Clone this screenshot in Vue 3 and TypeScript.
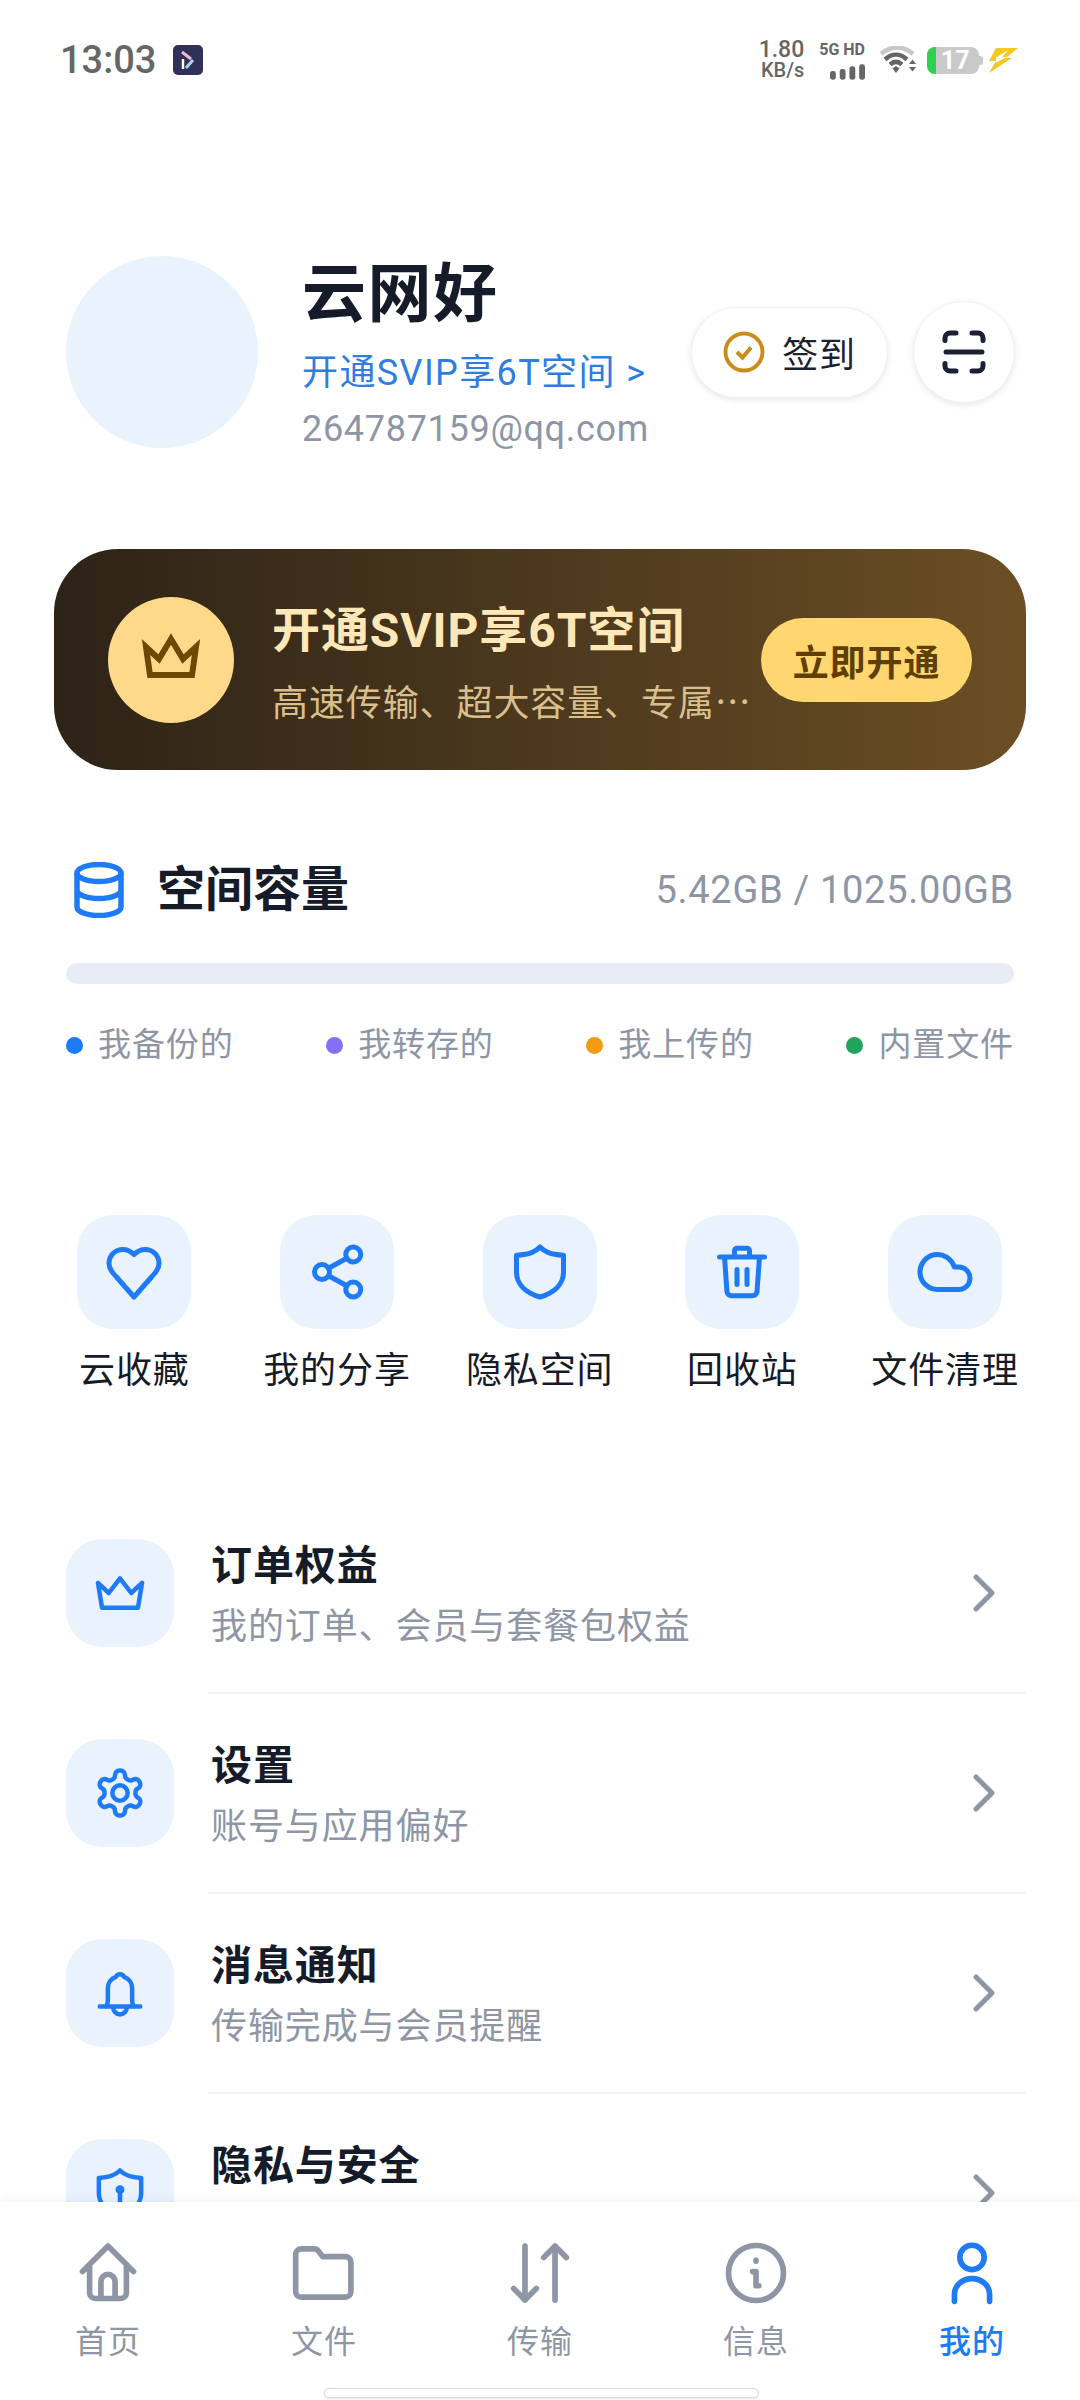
<script setup lang="ts">
type Shape = { d?: string; cx?: number; cy?: number; r?: number }

const icons: Record<string, Shape[]> = {
  heart: [{ d: 'M19 14c1.49-1.46 3-3.21 3-5.5A5.5 5.5 0 0 0 16.5 3c-1.76 0-3 .5-4.5 2-1.5-1.5-2.74-2-4.5-2A5.5 5.5 0 0 0 2 8.5c0 2.3 1.5 4.05 3 5.5l7 8Z' }],
  share: [
    { cx: 18.5, cy: 5, r: 3 },
    { cx: 6, cy: 12, r: 3 },
    { cx: 18.5, cy: 19, r: 3 },
    { d: 'M8.6 13.5l7.3 4M15.900 6.500l-7.300 4' },
  ],
  shield: [{ d: 'M12 2c1.8 1.900 4 3 9.400 3.300V12c0 4.800-3.600 8.300-9.400 10C6.200 20.300 2.600 16.800 2.600 12V5.300C8 5 10.200 3.900 12 2Z' }],
  trash: [{ d: 'M3 6h18M9 6V3.500A1 1 0 0 1 10 2.500h4a1 1 0 0 1 1 1V6M5 6l1 14a2 2 0 0 0 2 1.500h8a2 2 0 0 0 2-1.500l1-14M10 11v6M14 11v6' }],
  cloud: [{ d: 'M17.500 19H9a7 7 0 1 1 6.710-9h1.790a4.500 4.500 0 1 1 0 9Z' }],
  crown: [{ d: 'M2.200 7.500 7 12l5-6.500L17 12l4.800-4.500L20 18.500H4Z' }],
  gear: [
    { d: 'M12.220 2h-.44a2 2 0 0 0-2 2v.18a2 2 0 0 1-1 1.730l-.43.25a2 2 0 0 1-2 0l-.15-.08a2 2 0 0 0-2.730.73l-.22.38a2 2 0 0 0 .73 2.730l.15.1a2 2 0 0 1 1 1.720v.51a2 2 0 0 1-1 1.740l-.15.09a2 2 0 0 0-.73 2.730l.22.38a2 2 0 0 0 2.730.73l.15-.08a2 2 0 0 1 2 0l.43.25a2 2 0 0 1 1 1.730V20a2 2 0 0 0 2 2h.44a2 2 0 0 0 2-2v-.18a2 2 0 0 1 1-1.730l.43-.25a2 2 0 0 1 2 0l.15.08a2 2 0 0 0 2.730-.73l.22-.39a2 2 0 0 0-.73-2.730l-.15-.08a2 2 0 0 1-1-1.740v-.5a2 2 0 0 1 1-1.740l.15-.09a2 2 0 0 0 .73-2.730l-.22-.38a2 2 0 0 0-2.730-.73l-.15.08a2 2 0 0 1-2 0l-.43-.25a2 2 0 0 1-1-1.730V4a2 2 0 0 0-2-2Z' },
    { cx: 12, cy: 12, r: 3.4 },
  ],
  bell: [{ d: 'M3 18h18M5.800 18c.7-.8.8-2 .8-3V10a5.400 5.400 0 0 1 3.600-5.200 2 2 0 0 1 3.600 0 5.400 5.400 0 0 1 3.600 5.200v5c0 1 .1 2.200.8 3M9 18.500a3 3 0 0 0 6 0' }],
  lock: [{ d: 'M12 2c1.800 1.900 4 3 9.400 3.300V12c0 4.800-3.600 8.300-9.400 10C6.200 20.300 2.600 16.800 2.600 12V5.300C8 5 10.200 3.900 12 2ZM12 11v5' }, { cx: 12, cy: 10.500, r: 1 }],
  home: [{ d: 'M3 11.500 12 2.500l9 9M5.500 9.500V19a2 2 0 0 0 2 2h9a2 2 0 0 0 2-2V9.500M9.500 21v-6a2.500 2.500 0 0 1 5 0v6' }],
  folder: [{ d: 'M4 3.500h4.500a2 2 0 0 1 1.600.8l1.400 1.900h8a2 2 0 0 1 2 2V18.500a2 2 0 0 1-2 2H4a2 2 0 0 1-2-2v-13a2 2 0 0 1 2-2Z' }],
  transfer: [{ d: 'M6.700 2.500v19M2.700 17.500l4 4 4-4M17.300 21.500v-19M13.300 6.500l4-4 4 4' }],
  info: [{ cx: 12, cy: 12, r: 9.700 }, { d: 'M10.800 11.500H12V16.500h1M12 7.500v.3' }],
  user: [{ cx: 12, cy: 6.500, r: 4.300 }, { d: 'M5.800 22v-2.500a6.200 5.500 0 0 1 12.400 0V22' }],
}

const legend = [
  { label: '我备份的', color: '#1e7bf5' },
  { label: '我转存的', color: '#8370f5' },
  { label: '我上传的', color: '#f29c11' },
  { label: '内置文件', color: '#1fa45c' },
]

const tools = [
  { label: '云收藏', icon: 'heart' },
  { label: '我的分享', icon: 'share' },
  { label: '隐私空间', icon: 'shield' },
  { label: '回收站', icon: 'trash' },
  { label: '文件清理', icon: 'cloud' },
]

const menu = [
  { title: '订单权益', sub: '我的订单、会员与套餐包权益', icon: 'crown' },
  { title: '设置', sub: '账号与应用偏好', icon: 'gear' },
  { title: '消息通知', sub: '传输完成与会员提醒', icon: 'bell' },
  { title: '隐私与安全', sub: '', icon: 'lock' },
]

const tabs = [
  { label: '首页', icon: 'home' },
  { label: '文件', icon: 'folder' },
  { label: '传输', icon: 'transfer' },
  { label: '信息', icon: 'info' },
  { label: '我的', icon: 'user', active: true },
]
</script>

<template>
  <div class="page">
    <header class="status">
      <span class="time">13:03</span>
      <svg class="app-badge" viewBox="0 0 30 30">
        <rect width="30" height="30" rx="5" fill="#2f3158" />
        <path d="M9 7l9 7" stroke="#f2b6d8" stroke-width="3" />
        <path d="M10 14v10" stroke="#fff" stroke-width="2.500" />
        <path d="M20 15l-7 8" stroke="#a9d6f5" stroke-width="3" />
      </svg>
      <div class="status-right">
        <div class="speed"><span>1.80</span><span class="speed-unit">KB/s</span></div>
        <div class="net">
          <span>5G HD</span>
          <svg class="signal" viewBox="0 0 36 16">
            <rect x="0" y="7" width="6" height="9" rx="2.500" />
            <rect x="10" y="5" width="6" height="11" rx="2.500" />
            <rect x="20" y="2" width="6" height="14" rx="2.500" />
            <rect x="30" y="0" width="6" height="16" rx="2.500" />
          </svg>
        </div>
        <svg class="wifi" viewBox="0 0 38 28" fill="none">
          <path d="M2 8C11-.5 25-.5 34 8" stroke="#c8c8c8" stroke-width="4.500" />
          <path d="M6 13.500c7-6.500 15-6.500 22 0" stroke="#666" stroke-width="4.500" />
          <path d="M11 18.500c4-3.500 8-3.500 12 0" stroke="#666" stroke-width="4.500" />
          <path d="M13.500 22.500 17 20l3.500 2.500L17 27Z" fill="#666" />
          <path d="M30 18l3.500-4.500L37 18ZM30 21l3.500 4.500L37 21Z" fill="#666" />
        </svg>
        <div class="battery">
          <span class="battery-level"></span>
          <span class="battery-num">17</span>
          <span class="battery-cap"></span>
        </div>
        <svg class="bolt" viewBox="0 0 30 25">
          <path d="M8 0h22L18 10h6L1 25l7-12H1Z" fill="#f6c71e" />
          <path d="M8 9.500 20 2l-6 7.500 6-1-12 6Z" fill="#fff" />
        </svg>
      </div>
    </header>

    <section class="profile">
      <div class="avatar"></div>
      <div class="profile-text">
        <div class="name">云网好</div>
        <div class="upgrade-link">开通SVIP享6T空间 &gt;</div>
        <div class="email">264787159@qq.com</div>
      </div>
      <div class="profile-actions">
        <button class="checkin">
          <svg class="checkin-icon" viewBox="0 0 42 42" fill="none" stroke="#c98d1c">
            <circle cx="21" cy="21" r="18.500" stroke-width="4" />
            <path d="M14 21l5.500 5.500 8.500-10" stroke-width="4" />
          </svg>
          签到
        </button>
        <button class="scan">
          <svg viewBox="0 0 44 44" fill="none" stroke="#1a2130" stroke-width="5" stroke-linecap="round">
            <path d="M3 10.500V8a5 5 0 0 1 5-5h6M30 3h6a5 5 0 0 1 5 5v2.500M3 33.500V36a5 5 0 0 0 5 5h6M30 41h6a5 5 0 0 0 5-5v-2.500M4 22h36" />
          </svg>
        </button>
      </div>
    </section>

    <section class="banner">
      <div class="banner-badge">
        <svg viewBox="0 0 60 60" fill="none" stroke="#6e4700" stroke-width="6" stroke-linejoin="miter">
          <path d="M5 17l13 12L30 9l12 20 13-12-4 28H9Z" />
        </svg>
      </div>
      <div class="banner-text">
        <div class="banner-title">开通SVIP享6T空间</div>
        <div class="banner-sub">高速传输、超大容量、专属…</div>
      </div>
      <button class="banner-btn">立即开通</button>
    </section>

    <section class="storage">
      <div class="storage-head">
        <svg class="db-icon" viewBox="0 0 50 56" fill="none" stroke="#1e7bf5" stroke-width="5.500">
          <ellipse cx="25" cy="11" rx="22" ry="8.500" />
          <path d="M3 11v34c0 4.700 9.800 8.500 22 8.500s22-3.800 22-8.500V11M3 28c0 4.700 9.800 8.500 22 8.500s22-3.800 22-8.500" />
        </svg>
        <h2 class="storage-title">空间容量</h2>
        <span class="storage-value">5.42GB / 1025.00GB</span>
      </div>
      <div class="storage-bar"></div>
      <div class="legend">
        <div v-for="item in legend" :key="item.label" class="legend-item">
          <i class="legend-dot" :style="{ background: item.color }"></i>{{ item.label }}
        </div>
      </div>
    </section>

    <section class="tools">
      <div v-for="tool in tools" :key="tool.label" class="tool">
        <div class="tool-tile">
          <svg class="icon tool-icon" viewBox="0 0 24 24">
            <template v-for="(s, i) in icons[tool.icon]" :key="i">
              <path v-if="s.d" :d="s.d" />
              <circle v-else :cx="s.cx" :cy="s.cy" :r="s.r" />
            </template>
          </svg>
        </div>
        <span class="tool-label">{{ tool.label }}</span>
      </div>
    </section>

    <section class="menu">
      <div v-for="row in menu" :key="row.title" class="menu-row">
        <div class="menu-tile">
          <svg class="icon menu-icon" viewBox="0 0 24 24">
            <template v-for="(s, i) in icons[row.icon]" :key="i">
              <path v-if="s.d" :d="s.d" />
              <circle v-else :cx="s.cx" :cy="s.cy" :r="s.r" />
            </template>
          </svg>
        </div>
        <div class="menu-body">
          <div class="menu-title">{{ row.title }}</div>
          <div v-if="row.sub" class="menu-sub">{{ row.sub }}</div>
        </div>
        <svg class="chevron" viewBox="0 0 24 40" fill="none">
          <path d="M4 4l16 16L4 36" />
        </svg>
      </div>
    </section>

    <nav class="tabbar">
      <div class="tabs">
        <div v-for="tab in tabs" :key="tab.label" class="tab" :class="{ active: tab.active }">
          <svg class="icon tab-icon" viewBox="0 0 24 24">
            <template v-for="(s, i) in icons[tab.icon]" :key="i">
              <path v-if="s.d" :d="s.d" />
              <circle v-else :cx="s.cx" :cy="s.cy" :r="s.r" />
            </template>
          </svg>
          <span>{{ tab.label }}</span>
        </div>
      </div>
      <div class="home-indicator"></div>
    </nav>
  </div>
</template>

<style>
html, body {
  margin: 0;
  background: #fff;
}
</style>

<style scoped>
.page {
  position: relative;
  width: 1080px;
  height: 2400px;
  overflow: hidden;
  background: #fff;
  font-family: Roboto, "Noto Sans CJK SC", sans-serif;
  letter-spacing: 0.9px;
  color: #151b28;
}

.status {
  display: flex;
  align-items: center;
  height: 120px;
  padding: 0 62px 0 60px;
  box-sizing: border-box;
  color: #666;
  letter-spacing: 0;
}

.time {
  font-size: 38px;
  font-weight: 500;
}

.app-badge {
  width: 30px;
  height: 30px;
  margin-left: 17px;
}

.status-right {
  display: flex;
  align-items: center;
  margin-left: auto;
}

.speed {
  display: flex;
  flex-direction: column;
  align-items: flex-end;
  font-size: 23px;
  font-weight: 500;
  line-height: 21px;
}

.speed-unit {
  font-size: 20px;
}

.net {
  display: flex;
  flex-direction: column;
  align-items: flex-end;
  margin-left: 15px;
  font-size: 16px;
  font-weight: 700;
  line-height: 18px;
}

.signal {
  width: 35px;
  height: 16px;
  fill: #666;
  margin-top: 5px;
}

.wifi {
  width: 38px;
  height: 28px;
  margin-left: 14px;
}

.battery {
  position: relative;
  width: 52px;
  height: 27px;
  margin-left: 10px;
  border-radius: 8px;
  background: #c9c9c9;
}

.battery-level {
  position: absolute;
  left: 0;
  top: 0;
  width: 9px;
  height: 27px;
  border-radius: 8px 0 0 8px;
  background: #2fd24f;
}

.battery-num {
  position: absolute;
  left: 14px;
  top: 0;
  font-size: 25px;
  font-weight: 700;
  line-height: 27px;
  color: #fff;
}

.battery-cap {
  position: absolute;
  right: -4px;
  top: 9px;
  width: 4px;
  height: 9px;
  border-radius: 0 3px 3px 0;
  background: #c9c9c9;
}

.bolt {
  width: 30px;
  height: 25px;
  margin-left: 9px;
}

.profile {
  display: flex;
  align-items: center;
  height: 192px;
  margin-top: 136px;
  padding: 0 65px 0 66px;
}

.avatar {
  flex: none;
  width: 192px;
  height: 192px;
  border-radius: 50%;
  background: #e9f2fd;
}

.profile-text {
  margin-left: 44px;
  padding-top: 10px;
  white-space: nowrap;
}

.name {
  margin-top: -3px;
  font-size: 64px;
  font-weight: 700;
  line-height: 76px;
  letter-spacing: 1.5px;
}

.upgrade-link {
  margin-top: 15px;
  font-size: 36px;
  line-height: 50px;
  letter-spacing: 1.4px;
  color: #2f7de1;
}

.email {
  margin-top: 6px;
  font-size: 36px;
  line-height: 50px;
  letter-spacing: 0.7px;
  color: #8e96a5;
}

.profile-actions {
  display: flex;
  align-items: center;
  gap: 25px;
  margin-left: auto;
}

.checkin {
  display: flex;
  align-items: center;
  gap: 17px;
  height: 91px;
  padding: 0 31px;
  border: 1px solid #f0f1f4;
  border-radius: 46px;
  background: #fff;
  box-shadow: 0 2px 6px rgba(20, 30, 50, 0.1);
  font: inherit;
  font-size: 36px;
  letter-spacing: inherit;
  color: #1a2130;
}

.checkin-icon {
  width: 42px;
  height: 42px;
}

.scan {
  display: flex;
  align-items: center;
  justify-content: center;
  width: 102px;
  height: 102px;
  padding: 0;
  border: 1px solid #f0f1f4;
  border-radius: 50%;
  background: #fff;
  box-shadow: 0 2px 6px rgba(20, 30, 50, 0.1);
}

.scan svg {
  width: 44px;
  height: 44px;
}

.banner {
  display: flex;
  align-items: center;
  height: 221px;
  margin: 101px 54px 0;
  padding: 0 54px;
  border-radius: 64px;
  background: linear-gradient(90deg, #2d2317, #6b4e24);
}

.banner-badge {
  display: flex;
  flex: none;
  align-items: center;
  justify-content: center;
  width: 126px;
  height: 126px;
  border-radius: 50%;
  background: #ffd98a;
}

.banner-badge svg {
  width: 60px;
  height: 60px;
}

.banner-text {
  flex: 1;
  min-width: 0;
  margin-left: 38px;
  padding-top: 6px;
}

.banner-title {
  font-size: 48px;
  font-weight: 700;
  line-height: 60px;
  color: #ffe7b8;
}

.banner-sub {
  margin-top: 14px;
  font-family: "Noto Sans CJK SC", sans-serif;
  font-size: 36px;
  line-height: 50px;
  color: #d9bf8c;
  white-space: nowrap;
}

.banner-btn {
  flex: none;
  width: 211px;
  height: 84px;
  margin-left: 10px;
  padding: 0;
  border: none;
  border-radius: 42px;
  background: #ffd670;
  font: inherit;
  font-size: 36px;
  font-weight: 700;
  letter-spacing: inherit;
  color: #5e3f05;
}

.storage {
  margin-top: 92px;
  padding: 0 66px;
}

.storage-head {
  display: flex;
  align-items: center;
  height: 56px;
}

.db-icon {
  width: 50px;
  height: 56px;
  margin-left: 8px;
}

.storage-title {
  margin: -11px 0 0 33px;
  font-size: 48px;
  font-weight: 700;
  letter-spacing: 0;
}

.storage-value {
  margin-left: auto;
  font-size: 38px;
  letter-spacing: 0.7px;
  color: #8e96a5;
}

.storage-bar {
  height: 21px;
  margin-top: 45px;
  border-radius: 11px;
  background: #e8edf5;
}

.legend {
  display: flex;
  justify-content: space-between;
  margin-top: 40px;
}

.legend-item {
  display: flex;
  align-items: center;
  gap: 15px;
  font-size: 33px;
  line-height: 42px;
  color: #8e96a5;
}

.legend-dot {
  width: 17px;
  height: 17px;
  border-radius: 50%;
}

.icon {
  fill: none;
  stroke: currentColor;
  stroke-width: 2;
  stroke-linecap: round;
  stroke-linejoin: round;
}

.tools {
  display: grid;
  grid-template-columns: repeat(5, 202.700px);
  margin-top: 149px;
  padding-left: 33px;
}

.tool {
  display: flex;
  flex-direction: column;
  align-items: center;
}

.tool-tile {
  display: flex;
  align-items: center;
  justify-content: center;
  width: 114px;
  height: 114px;
  border-radius: 36px;
  background: #e9f2fd;
  color: #1e7bf5;
}

.tool-icon {
  width: 60px;
  height: 60px;
}

.tool-label {
  margin-top: 17px;
  font-size: 36px;
  line-height: 50px;
  white-space: nowrap;
}

.menu {
  margin-top: 143px;
  padding-left: 66px;
}

.menu-row {
  position: relative;
  display: flex;
  align-items: flex-start;
  height: 200px;
  box-sizing: border-box;
}

.menu-row::after {
  content: "";
  position: absolute;
  left: 142px;
  right: 54px;
  top: 153px;
  height: 2px;
  background: #f1f3f6;
}

.menu-tile {
  display: flex;
  flex: none;
  align-items: center;
  justify-content: center;
  width: 108px;
  height: 108px;
  border-radius: 36px;
  background: #e9f2fd;
  color: #1e7bf5;
}

.menu-icon {
  width: 54px;
  height: 54px;
}

.menu-body {
  flex: 1;
  margin-top: 1px;
  margin-left: 37px;
}

.menu-title {
  font-size: 41px;
  font-weight: 700;
  line-height: 52px;
}

.menu-sub {
  margin-top: 10px;
  font-size: 36px;
  line-height: 50px;
  color: #8e96a5;
}

.chevron {
  width: 24px;
  height: 40px;
  margin: 34px 84px 0 0;
  stroke: #8e96a5;
  stroke-width: 5;
  stroke-linecap: round;
  stroke-linejoin: round;
}

.tabbar {
  position: absolute;
  left: 0;
  right: 0;
  bottom: 0;
  height: 198px;
  background: #fff;
  box-shadow: 0 -2px 8px rgba(20, 30, 50, 0.06);
}

.tabs {
  display: grid;
  grid-template-columns: repeat(5, 216px);
  padding-top: 37px;
}

.tab {
  display: flex;
  flex-direction: column;
  align-items: center;
  font-size: 32px;
  color: #8e96a5;
}

.tab.active {
  color: #1e7bf5;
  font-weight: 500;
}

.tab-icon {
  width: 68px;
  height: 68px;
}

.tab span {
  margin-top: 13px;
  line-height: 44px;
}

.home-indicator {
  position: absolute;
  left: 324px;
  top: 186px;
  width: 433px;
  height: 8px;
  border: 1px solid #d9d9d9;
  border-radius: 5px;
  background: #fff;
  box-shadow: 0 1px 2px rgba(0, 0, 0, 0.1);
}
</style>
